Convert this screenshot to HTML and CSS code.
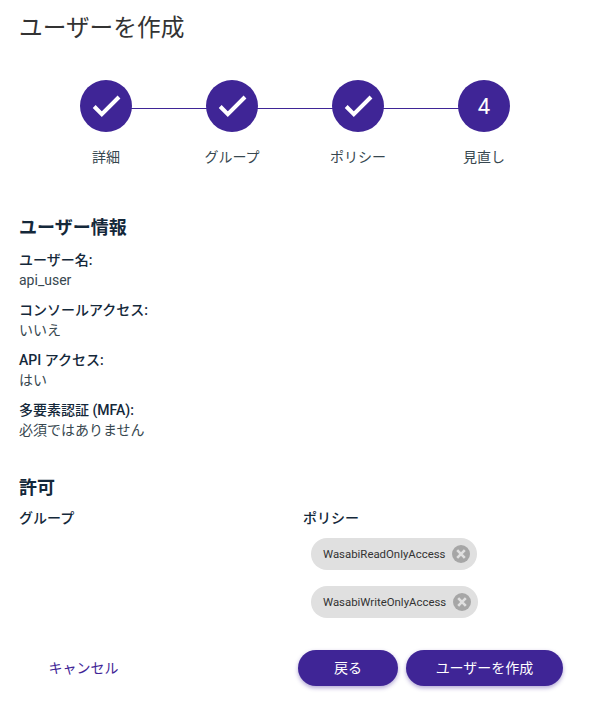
FILE: index.html
```html
<!DOCTYPE html>
<html lang="ja">
<head>
    <meta charset="UTF-8">
    <title>ユーザーを作成</title>
    <link rel="stylesheet" href="styles.css">
</head>
<body>
    <div class="container">
        <h1>ユーザーを作成</h1>

        <div class="stepper">
            <div class="step">
                <div class="step-circle">
                    <svg width="32" height="32" viewBox="0 0 32 32"><path d="M4.2 16.5 L11.8 24.2 L29 7" fill="none" stroke="#fff" stroke-width="4"/></svg>
                </div>
                <div class="step-label">詳細</div>
            </div>
            <div class="step">
                <div class="step-circle">
                    <svg width="32" height="32" viewBox="0 0 32 32"><path d="M4.2 16.5 L11.8 24.2 L29 7" fill="none" stroke="#fff" stroke-width="4"/></svg>
                </div>
                <div class="step-label">グループ</div>
            </div>
            <div class="step">
                <div class="step-circle">
                    <svg width="32" height="32" viewBox="0 0 32 32"><path d="M4.2 16.5 L11.8 24.2 L29 7" fill="none" stroke="#fff" stroke-width="4"/></svg>
                </div>
                <div class="step-label">ポリシー</div>
            </div>
            <div class="step">
                <div class="step-circle">4</div>
                <div class="step-label">見直し</div>
            </div>
        </div>

        <h2 class="section-title">ユーザー情報</h2>
        <div class="field">
            <div class="field-name">ユーザー名:</div>
            <div class="field-value">api_user</div>
        </div>
        <div class="field">
            <div class="field-name">コンソールアクセス:</div>
            <div class="field-value">いいえ</div>
        </div>
        <div class="field">
            <div class="field-name">API アクセス:</div>
            <div class="field-value">はい</div>
        </div>
        <div class="field">
            <div class="field-name">多要素認証 (MFA):</div>
            <div class="field-value">必須ではありません</div>
        </div>

        <h2 class="section-title permissions-title">許可</h2>
        <div class="permissions">
            <div class="field-name">グループ</div>
            <div>
                <div class="field-name">ポリシー</div>
                <div class="chips">
                    <div class="chip">
                        <span>WasabiReadOnlyAccess</span>
                        <svg width="18" height="18" viewBox="0 0 18 18"><circle cx="9" cy="9" r="9" fill="#a6a6a6"/><path d="M5.2 5.2 L12.8 12.8 M12.8 5.2 L5.2 12.8" stroke="#e0e0e0" stroke-width="2.6"/></svg>
                    </div>
                    <div class="chip">
                        <span>WasabiWriteOnlyAccess</span>
                        <svg width="18" height="18" viewBox="0 0 18 18"><circle cx="9" cy="9" r="9" fill="#a6a6a6"/><path d="M5.2 5.2 L12.8 12.8 M12.8 5.2 L5.2 12.8" stroke="#e0e0e0" stroke-width="2.6"/></svg>
                    </div>
                </div>
            </div>
        </div>

        <div class="actions">
            <button class="btn-cancel">キャンセル</button>
            <div class="actions-right">
                <button class="btn-primary btn-back">戻る</button>
                <button class="btn-primary btn-create">ユーザーを作成</button>
            </div>
        </div>
    </div>
</body>
</html>
```

FILE: styles.css
```css
html, body {
    margin: 0;
    padding: 0;
    background-color: #fff;
}
body {
    font-family: Roboto, "Noto Sans CJK JP", sans-serif;
    color: #37474f;
}
.container {
    width: 590px;
    height: 710px;
    padding: 13px 20px 0 19px;
    box-sizing: border-box;
    overflow: hidden;
}
h1 {
    margin: 0;
    font-size: 23.7px;
    line-height: 30px;
    font-weight: 400;
    color: #333;
}
.stepper {
    display: flex;
    margin-top: 37px;
    margin-left: 24px;
}
.step {
    width: 126px;
    position: relative;
    display: flex;
    flex-direction: column;
    align-items: center;
}
.step + .step::before { /* connector line between steps */
    content: "";
    position: absolute;
    top: 28px;
    right: 50%;
    width: 126px;
    height: 1px;
    background-color: #3f2596;
}
.step-circle {
    position: relative;
    z-index: 1;
    width: 52px;
    height: 52px;
    border-radius: 50%;
    background-color: #3f2596;
    color: #fff;
    font-size: 22px;
    display: flex;
    align-items: center;
    justify-content: center;
}
.step-label {
    margin-top: 15px;
    font-size: 14px;
    line-height: 20px;
    color: #37474f;
}
.section-title {
    margin: 48px 0 0 0;
    font-size: 18px;
    line-height: 26px;
    font-weight: 700;
    color: #14283a;
}
.field {
    margin-top: 10px;
    font-size: 14px;
    line-height: 20px;
}
.section-title + .field {
    margin-top: 9px;
}
.field-name {
    font-weight: 500;
    font-size: 14px;
    line-height: 20px;
    color: #14283a;
}
.field-value {
    margin-top: 0;
    color: #37474f;
}
.permissions-title {
    margin-top: 35px;
}
.permissions {
    display: grid;
    grid-template-columns: 284px 1fr;
    margin-top: 7px;
}
.chips {
    display: flex;
    flex-direction: column;
    align-items: flex-start;
    gap: 16px;
    margin-top: 10px;
    margin-left: 8px;
}
.chip {
    height: 32px;
    border-radius: 16px;
    background-color: #e0e0e0;
    display: flex;
    align-items: center;
    gap: 7px;
    padding: 0 7px 0 12px;
    font-size: 11.4px;
    color: #333;
}
.actions {
    display: flex;
    justify-content: space-between;
    align-items: center;
    margin-top: 32px;
    padding-right: 7px;
}
.actions-right {
    display: flex;
    gap: 8px;
}
button {
    font-family: inherit;
    font-size: 14px;
    border: none;
    cursor: pointer;
    height: 36px;
    padding: 0 0 2px 0;
    border-radius: 18px;
}
.btn-cancel {
    background: none;
    color: #3f2596;
    width: 99px;
    margin-left: 15px;
}
.btn-primary {
    background-color: #3f2596;
    color: #fff;
    box-shadow: 0 2px 4px rgba(63, 37, 150, 0.4);
}
.btn-back {
    width: 100px;
}
.btn-create {
    width: 157px;
}
```
